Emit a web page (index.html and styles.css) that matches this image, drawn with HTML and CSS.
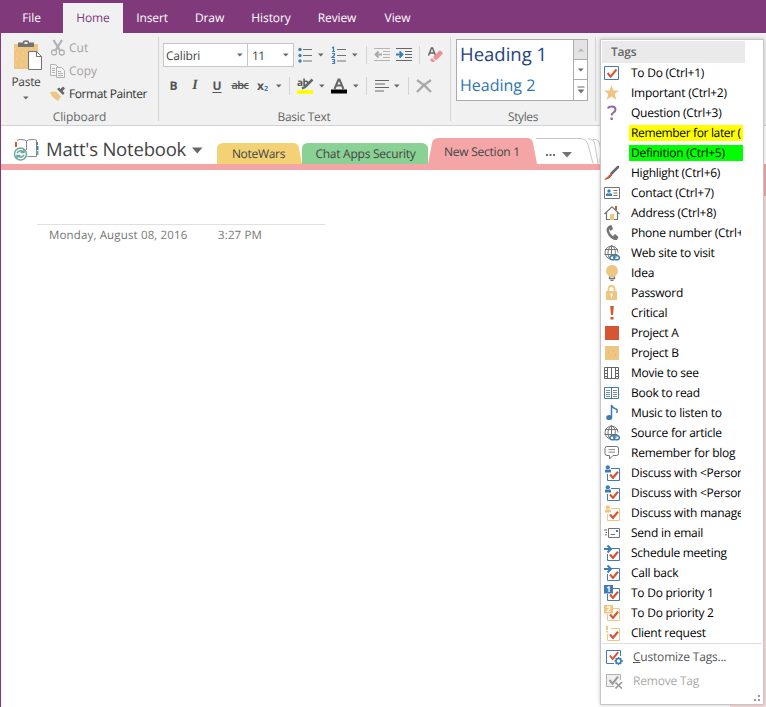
FILE: index.html
```html
<!DOCTYPE html>
<html lang="en">
<head>
<meta charset="utf-8">
<title>Matt's Notebook</title>
<link rel="stylesheet" href="styles.css">
</head>
<body>
<svg class="defs" width="0" height="0" aria-hidden="true">
  <symbol id="down" viewBox="0 0 6 4"><path d="M0 .5h5.600L2.800 3.500z" fill="#666"/></symbol>
  <symbol id="check" viewBox="0 0 16 16"><path d="M3.600 8l3 3.700L12.500 4.500" fill="none" stroke="#d65532" stroke-width="2"/></symbol>
  <symbol id="task" viewBox="0 0 16 16"><path d="M7 3.500h8.500v12H3.500V9" fill="none" stroke="currentColor"/><path d="M6 9.500l3 3.300 5-6" fill="none" stroke="#d65532" stroke-width="2.200"/></symbol>
  <symbol id="person" viewBox="0 0 16 16"><use href="#task"/><circle cx="3.800" cy="2.300" r="2.100" fill="currentColor"/><path d="M1 7.500V5l1.500-.8L4 5l1.300-.8L7 5v2.500z" fill="currentColor"/></symbol>
  <symbol id="forward" viewBox="0 0 16 16"><use href="#task"/><path d="M0 4h6M3.500.5L7 4 3.500 7.500" fill="none" stroke="currentColor" stroke-width="2"/></symbol>
  <symbol id="globe" viewBox="0 0 16 16"><g fill="none" stroke="#737373"><path d="M6.500 14A6.500 6.500 0 1 1 14 7.500M1 4.500h13M.5 9.500h13M7.500.5v13M6 14C2.500 9 4 3 7.500.5 11 3 12 6 11 9"/></g><g fill="#fff" stroke="#3e7cae" stroke-width="1.500"><rect x="6" y="10.700" width="5.500" height="4" rx="2"/><rect x="10" y="10.700" width="5.300" height="4" rx="2"/></g><path d="M9 12.700h3.500" stroke="#3e7cae"/></symbol>
</svg>
<div class="app">
  <nav class="tabs">
    <span class="tab file">File</span><span class="tab home">Home</span><span class="tab insert">Insert</span><span class="tab draw">Draw</span><span class="tab history">History</span><span class="tab review">Review</span><span class="tab view">View</span>
  </nav>
  <section class="ribbon">
    <div class="group clipboard">
      <div class="group-body">
        <div class="paste">
          <svg width="30" height="31" viewBox="0 0 30 31"><path d="M1 4h24v25H1z" fill="#eec681"/><path d="M2 9h1m3-2h1m5 3h1m5-2h1M4 14h1m5-1h1M3 19h1m5-1h1M2 24h1m5 1h1" stroke="#f7dca9"/><path d="M5 2.500h5V1q3-1.500 6 0v1.500h5V7H5z" fill="#737373"/><path d="M11.500 2h3v2h-3z" fill="#f1f1f1"/><path d="M15.500 11.500h8l5 5v13h-13z" fill="#fff" stroke="#737373"/><path d="M23.500 11.500v5h5" fill="none" stroke="#737373"/></svg>
          <span>Paste</span>
          <svg class="arrow" width="6" height="4"><use href="#down"/></svg>
        </div>
        <div class="commands">
          <div class="command off"><svg width="16" height="16"><path d="M3.500 0L10 10.500M12 0L5.500 10.500" stroke="#b1b1b1" stroke-width="2.200"/><circle cx="4" cy="12.500" r="2.500" fill="none" stroke="#b1b1b1" stroke-width="1.300"/><circle cx="11.800" cy="12.500" r="2.500" fill="none" stroke="#b1b1b1" stroke-width="1.300"/></svg><span class="t-cut">Cut</span></div>
          <div class="command off"><svg width="16" height="16"><g fill="#f4f4f4" stroke="#b1b1b1"><path d="M.5 1.500h5l3 3v8h-8z"/><path d="M6.500 4.500h5l3 3v7h-8z"/><path d="M2 5.500h3m-3 2h3m-3 2h3m3-1h3m-3 2h5m-5 2h5"/></g></svg><span class="t-copy">Copy</span></div>
          <div class="command"><svg width="16" height="16"><path d="M0 6l6-.5 5 5-3 4.500q-6-3-8-9z" fill="#eec681"/><path d="M7 3l6 6 1.500-2-2-2 2.500-2.500L13 .5 10.500 3 9 1.500z" fill="#666"/></svg><span class="t-painter">Format Painter</span></div>
        </div>
      </div>
      <div class="group-name"><span class="t-clip">Clipboard</span></div>
    </div>
    <div class="group basic">
      <div class="row row-one">
        <div class="combo family"><span>Calibri</span><svg width="6" height="4"><use href="#down"/></svg></div>
        <div class="combo size"><span>11</span><svg width="6" height="4"><use href="#down"/></svg></div>
        <i><svg width="14" height="16"><g fill="#3e7cb5"><circle cx="2" cy="2.500" r="1.700"/><circle cx="2" cy="8.500" r="1.700"/><circle cx="2" cy="14" r="1.700"/></g><path d="M5 2.500h9m-9 6h9m-9 5.500h9" stroke="#737373"/></svg></i>
        <i><svg width="6" height="4"><use href="#down"/></svg></i>
        <i><svg width="15" height="18"><path d="M1 2l1.500-1v4.500M1 5.500h3M1 7.500h2.500V9L1 11.500h3M1 13.500h2.500v4H1m.5-2h2" fill="none" stroke="#3e7cb5" stroke-width="1.200"/><path d="M6 3.500h9m-9 6h9m-9 5.500h9" stroke="#737373"/></svg></i>
        <i><svg width="6" height="4"><use href="#down"/></svg></i>
        <i><b class="rule"></b></i>
        <i><svg width="16" height="14"><path d="M0 .5h16m-7 3h7m-7 3h7m-7 3h7M0 12.500h16" stroke="#b5b5b5"/><path d="M8 6.500H1.500M4.500 3.500l-3 3 3 3" fill="none" stroke="#aaa" stroke-width="1.800"/></svg></i>
        <i><svg width="16" height="14"><path d="M0 .5h16m-7 3h7m-7 3h7m-7 3h7M0 12.500h16" stroke="#666"/><path d="M0 6.500h6.500M3.500 3.500l3 3-3 3" fill="none" stroke="#3e7cae" stroke-width="1.800"/></svg></i>
        <i><b class="rule"></b></i>
        <i><svg width="15" height="16"><path d="M.5 8.500L3.500 1h1l3 7.500M2 6h4" fill="none" stroke="#666" stroke-width="1.500"/><path d="M5 10l6-6q1-1 2 0l1.500 1.500q.8.800 0 1.600L8 13.500z" fill="#ec9292"/><path d="M4 11l3 3-1 1H4L2 13z" fill="#ec9292"/></svg></i>
      </div>
      <div class="row row-two">
        <i class="letter">B</i><i class="letter ital">I</i><i class="letter under">U</i><i class="letter strike"><span>abc</span></i><i class="letter sub">x<small>2</small></i>
        <i><svg width="6" height="4"><use href="#down"/></svg></i>
        <i><b class="rule"></b></i>
        <i><svg width="17" height="17"><text x="0" y="8" class="ab">ab</text><path d="M15.500 1.500L8 9l-3 1.500" fill="none" stroke="#666" stroke-width="2.500"/><path d="M0 12h16v4H0z" fill="#ff0"/></svg></i>
        <i><svg width="6" height="4"><use href="#down"/></svg></i>
        <i><svg width="16" height="16"><path d="M3.500 11L7.500 1.500h1l4 9.500M5 7.500h6" fill="none" stroke="#666" stroke-width="2"/><path d="M0 11.500h16v4H0z" fill="#000"/></svg></i>
        <i><svg width="6" height="4"><use href="#down"/></svg></i>
        <i><b class="rule"></b></i>
        <i><svg width="15" height="12"><path d="M0 .5h14M0 4h10M0 7.500h14M0 11h9" stroke="#666"/></svg></i>
        <i><svg width="6" height="4"><use href="#down"/></svg></i>
        <i><b class="rule"></b></i>
        <i><svg width="16" height="14"><path d="M1 1q8 5 14 12M15 1Q7 6 1 13" fill="none" stroke="#aaa" stroke-width="2.300"/></svg></i>
      </div>
      <div class="group-name"><span class="t-basic">Basic Text</span></div>
    </div>
    <div class="group styles">
      <div class="gallery">
        <div class="headings"><span class="h-one">Heading 1</span><span class="h-two">Heading 2</span></div>
        <div class="scroller">
          <b class="dim"><svg width="6" height="4"><path d="M0 3.500h6L3 .5z" fill="#b5b5b5"/></svg></b>
          <b><svg width="6" height="4"><use href="#down"/></svg></b>
          <b><svg width="8" height="8"><path d="M.5 1h7" stroke="#666"/><path d="M.5 3.500h7L4 7.500z" fill="#737373"/></svg></b>
        </div>
      </div>
      <div class="group-name"><span class="t-styles">Styles</span></div>
    </div>
  </section>
  <header class="notebook">
    <svg class="book" width="26" height="24" viewBox="0 0 26 24"><path d="M3 2.500q1-1 4-1 4 0 5.500 1.500 1.500-1.500 5.500-1.500 3 0 4.500.5v16.500h-9M12.500 3v9" fill="none" stroke="#8a8a8a"/><path d="M1 4h2v5H1z" fill="#d65532"/><path d="M22.500 4h1.500v3h-1.500z" fill="#777"/><path d="M22.500 8h2v4h-2z" fill="#3e7cb5"/><path d="M22.500 13h2v4h-2z" fill="#69a79b"/><circle cx="6.500" cy="16" r="6" fill="#fff" stroke="#69a79b" stroke-width="1.500"/><path d="M3 15q3-4 6.500-1M10 11v3.500H6.500M10 17q-3 4-6.500 1M3 21v-3.500h3.500" fill="none" stroke="#69a79b" stroke-width="1.600"/></svg>
    <span class="title">Matt's Notebook</span>
    <svg class="title-arrow" width="11" height="7"><path d="M0 .5h10.500L5.300 6.500z" fill="#666"/></svg>
    <div class="section wars"><svg width="87" height="21"><path d="M0 21V6q0-6 6-6h70q5 0 6 5l3 16z" fill="#f3d275"/></svg><span>NoteWars</span></div>
    <div class="section chat"><svg width="128" height="21"><path d="M1 21V6q0-6 6-6h113q6 0 7 5v16z" fill="#89d194"/></svg><span>Chat Apps Security</span></div>
    <div class="section current"><svg width="110" height="26"><path d="M0 26L4 5q1-5 7-5h88q5 0 6 5l4 21z" fill="#f4a6a6"/></svg><span>New Section 1</span></div>
    <div class="section more"><svg width="70" height="26"><path d="M0 .5h46q5 1 6 6l5 19M52 1q6-1 7 6l3 18.500M57 1.500q6-1 7 6l3 18M67 11q-3 3-3 14" fill="none" stroke="#c6c6c6"/><path d="M26 14h10L31 19.500z" fill="#737373"/><path d="M10 17h2m1.500 0h2m1.500 0h2" stroke="#737373" stroke-width="2"/></svg></div>
  </header>
  <main class="page">
    <div class="stamp"><span class="t-date">Monday, August 08, 2016</span><span class="t-time">3:27 PM</span></div>
  </main>
</div>
<div class="edge"><b></b></div>
<aside class="menu">
  <h2><span class="t-tags">Tags</span></h2>
  <ul>
    <li><svg class="icon" viewBox="0 0 16 16"><path d="M.5 1.500h14v13H.5z" fill="#fff" stroke="#3e7cb5"/><use href="#check"/></svg><span>To Do (Ctrl+1)</span></li>
    <li><svg class="icon" viewBox="0 0 16 16"><path d="M7.500 0l2 5.500H15L10.700 9l1.700 6-4.900-3.500L2.600 15l1.700-6L0 5.500h5.500z" fill="#eec681"/></svg><span>Important (Ctrl+2)</span></li>
    <li><svg class="icon" viewBox="0 0 16 16"><path d="M4 3.500q.5-2 3.500-2 4 0 4 3 0 1.700-2 3T7.700 10.500" fill="none" stroke="#8e6aa3" stroke-width="2"/><path d="M6.500 12.500h2.300V15H6.500z" fill="#8e6aa3"/></svg><span>Question (Ctrl+3)</span></li>
    <li><i class="icon"></i><span class="yellow">Remember for later (</span></li>
    <li><i class="icon"></i><span class="green">Definition (Ctrl+5)</span></li>
    <li><svg class="icon" viewBox="0 0 16 16"><path d="M14 2L7.500 8.500" stroke="#666" stroke-width="2.500" stroke-linecap="round"/><path d="M7 9L3.500 12 1 14.500l4-1.500L8 10z" fill="#d65532" stroke="#d65532"/></svg><span>Highlight (Ctrl+6)</span></li>
    <li><svg class="icon" viewBox="0 0 16 16"><path d="M.5 2.500h15v11H.5z" fill="#fff" stroke="#737373"/><circle cx="5" cy="6" r="1.700" fill="#3e7cb5"/><path d="M2 11V9l2-1 1 1 1-1 2 1v2z" fill="#3e7cb5"/><path d="M9.500 5.500h4m-4 2.500h4m-4 2.500h4" stroke="#737373"/></svg><span>Contact (Ctrl+7)</span></li>
    <li><svg class="icon" viewBox="0 0 16 16"><path d="M11 1h2v4h-2z" fill="#d65532"/><path d="M2.500 7.500v7h11v-7M.5 9L8 1.800 15.500 9" fill="#fff" stroke="#737373" stroke-width="1.200"/><path d="M6 9h4v6H6z" fill="#eec681"/></svg><span>Address (Ctrl+8)</span></li>
    <li><svg class="icon" viewBox="0 0 16 16"><path d="M6 1.500Q2 4.500 5.500 9.500t7.500 4" fill="none" stroke="#737373" stroke-width="2.500"/><path d="M4.500 1l3-1 1.500 4-2.500 2zM9 11l2-2 3.500 3-1.500 2.500z" fill="#737373"/></svg><span>Phone number (Ctrl+</span></li>
    <li><svg class="icon"><use href="#globe"/></svg><span>Web site to visit</span></li>
    <li><svg class="icon" viewBox="0 0 16 16"><path d="M8 0a5.800 5.800 0 0 1 3.500 10.500L10.500 12h-5L4.500 10.500A5.800 5.800 0 0 1 8 0" fill="#eec681"/><path d="M5.500 11.500v2h5v-2M6.500 15.300h3" fill="none" stroke="#737373" stroke-width="1.300"/></svg><span>Idea</span></li>
    <li><svg class="icon" viewBox="0 0 16 16"><path d="M4.500 7V4q0-3 3-3t3 3v3" fill="none" stroke="#eec681" stroke-width="1.800"/><path d="M2 6h11v9H2z" fill="#eec681"/><path d="M6.500 8.500h2v2h-.5V13H7v-2.500h-.5z" fill="#fff"/></svg><span>Password</span></li>
    <li><svg class="icon" viewBox="0 0 16 16"><path d="M6.200 1h3.600L9 10H7zM6.500 12h3v2.500h-3z" fill="#d65532"/></svg><span>Critical</span></li>
    <li><svg class="icon" viewBox="0 0 16 16"><path d="M1 1h14v14H1z" fill="#d65532"/></svg><span>Project A</span></li>
    <li><svg class="icon" viewBox="0 0 16 16"><path d="M1 1h14v14H1z" fill="#eec681"/><path d="M4 7h1m4-1h1m1 4h1M5 12h1" stroke="#dca961"/></svg><span>Project B</span></li>
    <li><svg class="icon" viewBox="0 0 16 16"><path d="M.5 2.500h14v11H.5zM3.500 2.500v11m8-11v11M7.500 2.500v11M.5 5.500h3m-3 3h3m-3 3h3m8-6h3m-3 3h3m-3 3h3" fill="none" stroke="#666"/></svg><span>Movie to see</span></li>
    <li><svg class="icon" viewBox="0 0 16 16"><path d="M.5 2.500h14v11H.5zM7.500 2.500v11" fill="#fff" stroke="#3e7cb5"/><path d="M2 5.500h4M2 7.500h4M2 9.500h4M2 11.500h4m3-6h4M9 7.500h4M9 9.500h4m-4 2h4" stroke="#888"/></svg><span>Book to read</span></li>
    <li><svg class="icon" viewBox="0 0 16 16"><path d="M7.500 12V0q1 3 5.500 4.500V8" fill="none" stroke="#3e7cb5" stroke-width="1.500"/><ellipse cx="5.200" cy="12.500" rx="3" ry="2.600" fill="#3e7cb5"/></svg><span>Music to listen to</span></li>
    <li><svg class="icon"><use href="#globe"/></svg><span>Source for article</span></li>
    <li><svg class="icon" viewBox="0 0 16 16"><path d="M3 1.500h9.500q2 0 2 2v5q0 2-2 2H9L5.500 14v-3.500H3q-2 0-2-2v-5q0-2 2-2z" fill="#fff" stroke="#737373"/><path d="M4.500 4.700h6.500m-6.500 2.500h6.500" stroke="#888"/></svg><span>Remember for blog</span></li>
    <li><svg class="icon blue"><use href="#person"/></svg><span>Discuss with &lt;Person</span></li>
    <li><svg class="icon blue"><use href="#person"/></svg><span>Discuss with &lt;Person</span></li>
    <li><svg class="icon gold"><use href="#person"/></svg><span>Discuss with manage</span></li>
    <li><svg class="icon" viewBox="0 0 16 16"><path d="M0 5h3M1.500 7.500H3m-2 2.300h2" stroke="#666"/><path d="M4.500 3.500h11v9h-11zM6.500 9.500H11" fill="#fff" stroke="#737373"/><path d="M12 5h2v2h-2z" fill="#3e7cb5"/></svg><span>Send in email</span></li>
    <li><svg class="icon blue"><use href="#forward"/></svg><span>Schedule meeting</span></li>
    <li><svg class="icon blue"><use href="#forward"/></svg><span>Call back</span></li>
    <li><svg class="icon blue" viewBox="0 0 16 16"><use href="#task"/><path d="M0 0h9v8.500H0z" fill="currentColor"/><text x="2.200" y="7" class="num">1</text></svg><span>To Do priority 1</span></li>
    <li><svg class="icon gold" viewBox="0 0 16 16"><use href="#task"/><path d="M0 0h9v8.500H0z" fill="currentColor"/><text x="2.200" y="7" class="num">2</text></svg><span>To Do priority 2</span></li>
    <li><svg class="icon gold" viewBox="0 0 16 16"><use href="#task"/><path d="M2 1h2v4H2zm0 5h2v1.500H2z" fill="currentColor"/></svg><span>Client request</span></li>
  </ul>
  <div class="actions">
    <div class="action"><svg width="17" height="16"><path d="M14.500 7V1.500H.5v13H8" fill="none" stroke="#3e7cb5"/><use href="#check" width="16" height="15" y="-1"/><circle cx="12.500" cy="12" r="2.500" fill="none" stroke="#3e7cb5" stroke-width="1.500"/><path d="M12.500 8v1.500m0 5V16m-4-4H10m5 0h2m-7.300-3l1 1m3.500 4l1 1m0-6l-1 1m-3.500 4l-1 1" stroke="#3e7cb5" stroke-width="1.300"/></svg><span class="t-custom"><u>C</u>ustomize Tags...</span></div>
    <div class="action off"><svg width="17" height="16"><path d="M14.500 7V1.500H.5v12H8" fill="#f0f0f0" stroke="#b1b1b1"/><path d="M3.500 7l3 3.700 5.500-7" fill="none" stroke="#999" stroke-width="2"/><path d="M9.500 9.500L16 15.500m0-6.500L9.500 15.500" stroke="#999" stroke-width="1.700"/></svg><span class="t-remove">Remove Tag</span></div>
  </div>
  <svg class="grip" width="7" height="7"><path d="M4 0h2v2H4zM0 4h2v2H0zM4 4h2v2H4z" fill="#999"/></svg>
</aside>
</body>
</html>
```
FILE: styles.css
```css
* { box-sizing: border-box; }
body { margin: 0; width: 766px; height: 707px; overflow: hidden; background: #fff; color: #444; font: 12px/16px "Open Sans", "Noto Sans", sans-serif; text-rendering: geometricPrecision; }
svg { display: block; flex: none; overflow: visible; }
.defs { position: absolute; }
span { white-space: nowrap; }
.app { height: 707px; border-left: 1px solid #80397b; display: flex; flex-direction: column; }
.tabs { height: 33px; background: #80397b; display: flex; padding-top: 3px; color: #fff; }
.tab { height: 30px; line-height: 30px; text-align: center; letter-spacing: -.1px; }
.file { width: 61px; }
.home { width: 60px; margin-left: 1px; background: #f1f1f1; color: #80397b; }
.insert { width: 58px; }
.draw { width: 57px; }
.history { width: 66px; }
.review { width: 66px; }
.view { width: 55px; }

.ribbon { height: 93px; background: #f1f1f1; border-bottom: 1px solid #d2d2d2; display: flex; padding: 4px 0; }
.group { height: 84px; border-right: 1px solid #d4d4d4; display: flex; flex-direction: column; }
.group-name { margin-top: auto; height: 16px; margin-bottom: -4px; text-align: center; color: #666; letter-spacing: -.1px; }
.clipboard { width: 158px; }
.basic { width: 292px; padding: 6px 0 0 4px; }
.basic .group-name { padding-right: 5px; letter-spacing: -.3px; }
.styles { width: 145px; padding: 2px 0 0 5px; }
.styles .group-name { padding-right: 5px; letter-spacing: -.4px; }
.group-body { display: flex; padding-left: 10px; }
.paste { width: 30px; display: flex; flex-direction: column; align-items: center; padding-top: 3px; color: #444; letter-spacing: -.3px; }
.paste svg:first-child { margin-left: 4px; }
.paste span { margin-top: 3px; }
.paste .arrow { margin-top: 6px; }
.commands { padding: 0 0 0 9px; margin-top: -1px; }
.command { height: 23px; display: flex; align-items: center; gap: 3px; color: #333; }
.t-painter { letter-spacing: -.4px; }
.off { color: #a5a0a5; }
.row { display: flex; }
.row i { display: flex; align-items: center; justify-content: center; font-style: normal; }
.row-one { display: grid; grid-template-columns: 85px 46px 21px 12px 22px 12px 10px 22px 22px 9px 22px; height: 24px; }
.row-two { display: grid; grid-template-columns: 21px 22px 22px 24px 21px 11px 10px 22px 11px 24px 10px 10px 22px 8px 14px 17px; height: 24px; margin-top: 7px; }
.combo { display: flex; align-items: center; justify-content: space-between; background: #fff; border: 1px solid #c6c6c6; padding: 0 4px 0 2px; height: 24px; }
.family span { position: relative; top: 1px; letter-spacing: -.2px; }
.size span { position: relative; top: 1px; letter-spacing: -.7px; }
.size { border-left: 0; padding-left: 4px; }
.rule { width: 1px; height: 18px; background: #d4d4d4; }
.letter { font-weight: 700; color: #555; }
.row .ital { font-style: italic; font-family: "Liberation Serif", serif; font-size: 14px; }
.under { text-decoration: underline; text-underline-offset: 2px; }
.strike span { font-size: 11px; font-weight: 600; letter-spacing: -.5px; text-decoration: line-through; }
.sub small { color: #3e7cb5; font-size: 7px; align-self: flex-end; }
.ab { font: 700 10px "Open Sans", sans-serif; fill: #555; letter-spacing: -.5px; }
.gallery { width: 132px; height: 62px; background: #fff; border: 1px solid #ababab; display: flex; }
.headings { width: 117px; display: flex; flex-direction: column; padding-left: 3px; }
.h-one { font-size: 18.500px; line-height: 29px; color: #1e4582; }
.h-two { font-size: 16px; line-height: 32px; color: #2e74b5; }
.scroller { width: 14px; border-left: 1px solid #ababab; display: grid; grid-template-rows: 20px 20px 20px; }
.scroller b { display: flex; align-items: center; justify-content: center; border-bottom: 1px solid #ababab; }
.scroller b:last-child { border: 0; }
.scroller .dim { background: #e3e3e3; }

.notebook { height: 44px; border-bottom: 6px solid #f4a6a6; display: flex; align-items: flex-end; padding-left: 13px; }
.book { margin-bottom: 2px; }
.title { margin-left: 6px; font-size: 18.500px; line-height: 30px; width: 146px; letter-spacing: -.2px; margin-bottom: -1px; }
.title-arrow { margin-bottom: 10px; width: 25px; }
.section { position: relative; display: flex; justify-content: center; align-items: center; color: #444; }
.section svg { position: absolute; left: 0; bottom: 0; }
.section span { position: relative; }
.wars { width: 84px; height: 21px; padding-right: 3px; letter-spacing: -.3px; }
.chat { width: 127px; height: 21px; letter-spacing: -.25px; }
.wars span, .chat span { left: 1px; }
.current { width: 108px; height: 26px; z-index: 1; letter-spacing: -.25px; }
.current span { top: 1px; left: -1px; }
.current span { left: 0; }
.more { width: 65px; height: 26px; }
.page { flex: 1; padding: 54px 0 0 36px; }
.stamp { width: 288px; border-top: 1px solid #e0e0e0; padding: 3px 0 0 12px; display: flex; color: #767676; font-size: 11.500px; letter-spacing: .15px; }
.t-date { width: 169px; }

.edge { position: absolute; right: 0; top: 164px; width: 36px; height: 543px; background: #fbdcdc; }
.edge b { display: block; height: 32px; background: #f4a6a6; }
.menu { position: absolute; left: 600px; top: 39px; width: 164px; height: 666px; background: #fff; border: 1px solid #c6c6c6; box-shadow: 0 0 4px rgba(0,0,0,.22); color: #000; }
.menu h2 { margin: 1px 0 0 1px; width: 143px; height: 22px; padding-left: 9px; background: #eaeaea; font-size: 12px; font-weight: 600; line-height: 22px; color: #666; letter-spacing: -.2px; }
.menu ul { margin: 0; padding: 0; list-style: none; width: 142px; }
.menu li { height: 20px; display: flex; align-items: center; padding-left: 3px; }
.icon { width: 16px; height: 16px; flex: none; }
.menu li span { margin-left: 9px; padding-left: 2px; width: 112px; overflow: hidden; height: 16px; line-height: 16px; letter-spacing: -.25px; }
.menu li .yellow { background: #ff0; width: 114px; letter-spacing: -.35px; }
.menu li .green { background: #0f0; width: 114px; }
.blue { color: #3e7cb5; }
.gold { color: #eec681; }
.num { font: 700 8px "Open Sans", sans-serif; fill: #fff; }
.actions { border-top: 1px solid #e0e0e0; padding-top: 1px; margin: 0 1px; }
.action { height: 24px; display: flex; align-items: center; gap: 10px; padding-left: 4px; color: #555; letter-spacing: -.2px; }
.actions .off { color: #aaa; }
.grip { position: absolute; right: 2px; bottom: 2px; }
```
